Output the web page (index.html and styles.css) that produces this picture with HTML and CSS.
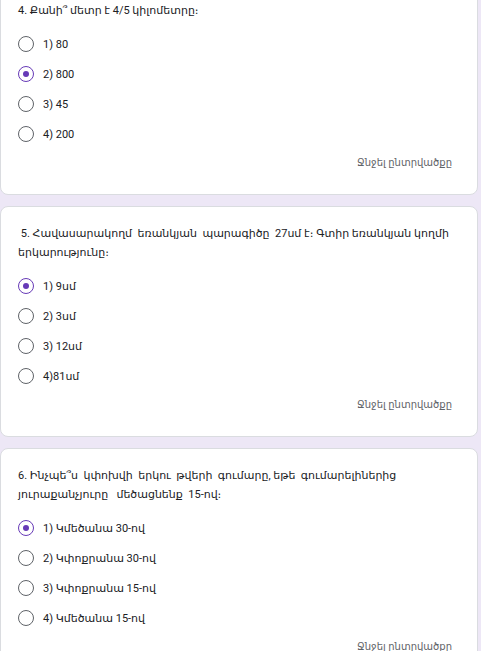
FILE: index.html
```html
<!DOCTYPE html>
<html lang="hy">
<head>
    <meta charset="UTF-8">
    <meta name="viewport" content="width=device-width, initial-scale=1.0">
    <title>Թեստ</title>
    <link rel="stylesheet" href="styles.css">
</head>
<body>
    <div class="form">
        <div class="card">
            <div class="question">4. Քանի՞ մետր է 4/5 կիլոմետրը։</div>
            <div class="options">
                <label class="option"><span class="radio"></span>1) 80</label>
                <label class="option"><span class="radio checked"></span>2) 800</label>
                <label class="option"><span class="radio"></span>3) 45</label>
                <label class="option"><span class="radio"></span>4) 200</label>
            </div>
            <div class="clear">Ջնջել ընտրվածքը</div>
        </div>

        <div class="card">
            <div class="question"> 5. Հավասարակողմ  եռանկյան  պարագիծը  27սմ է։ Գտիր եռանկյան կողմի<br>երկարությունը։</div>
            <div class="options">
                <label class="option"><span class="radio checked"></span>1) 9սմ</label>
                <label class="option"><span class="radio"></span>2) 3սմ</label>
                <label class="option"><span class="radio"></span>3) 12սմ</label>
                <label class="option"><span class="radio"></span>4)81սմ</label>
            </div>
            <div class="clear">Ջնջել ընտրվածքը</div>
        </div>

        <div class="card">
            <div class="question">6. Ինչպե՞ս  կփոխվի  երկու  թվերի  գումարը, եթե  գումարելիներից<br>յուրաքանչյուրը   մեծացնենք  15-ով։</div>
            <div class="options">
                <label class="option"><span class="radio checked"></span>1) Կմեծանա 30-ով</label>
                <label class="option"><span class="radio"></span>2) Կփոքրանա 30-ով</label>
                <label class="option"><span class="radio"></span>3) Կփոքրանա 15-ով</label>
                <label class="option"><span class="radio"></span>4) Կմեծանա 15-ով</label>
            </div>
            <div class="clear">Ջնջել ընտրվածքը</div>
        </div>
    </div>
</body>
</html>
```

FILE: styles.css
```css
body {
    font-family: Roboto, "Noto Sans", Arial, "DejaVu Sans", sans-serif;
    margin: 0;
    padding: 0;
    background-color: #ede7f6;
    color: #202124;
    overflow: hidden;
}
.form {
    display: flex;
    flex-direction: column;
    gap: 11px;
    margin-top: -17px;
    margin-right: 3px;
}
.card {
    background: white;
    border: 1px solid #dadce0;
    border-radius: 8px;
    padding: 17px 25px 23px 17px;
}
.question {
    font-size: 11px;
    line-height: 19px;
    white-space: pre;
}
.options {
    margin-top: 9px;
}
.option {
    display: flex;
    align-items: center;
    gap: 9px;
    height: 30px;
    font-size: 11px;
}
.radio {
    width: 16px;
    height: 16px;
    box-sizing: border-box;
    border: 1.5px solid #5f6368;
    border-radius: 50%;
    display: flex;
    align-items: center;
    justify-content: center;
    flex-shrink: 0;
}
.radio.checked {
    border-color: #673ab7;
}
.radio.checked::after {
    content: "";
    width: 6px;
    height: 6px;
    border-radius: 50%;
    background: #673ab7;
}
.clear {
    margin-top: 6px;
    line-height: 16px;
    font-size: 10px;
    color: #5f6368;
    text-align: right;
}
```
